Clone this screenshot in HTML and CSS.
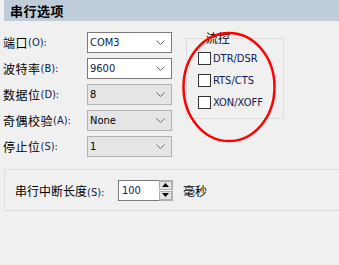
FILE: index.html
```html
<!DOCTYPE html>
<html lang="zh-CN">
<head>
<meta charset="utf-8">
<title>串行选项</title>
<link rel="stylesheet" href="styles.css">
</head>
<body>
<div class="page">
  <div class="header">串行选项</div>
  <div class="main">
    <div class="form">
      <label class="lbl">端口<span class="lat">(O):</span></label>
      <div class="combo"><span class="val">COM3</span><svg class="chev" width="9" height="5" viewBox="0 0 9 5"><polyline points="0.5,0.5 4.5,4.5 8.5,0.5" fill="none" stroke="#606060" stroke-width="1"/></svg></div>
      <label class="lbl">波特率<span class="lat">(B):</span></label>
      <div class="combo"><span class="val">9600</span><svg class="chev" width="9" height="5" viewBox="0 0 9 5"><polyline points="0.5,0.5 4.5,4.5 8.5,0.5" fill="none" stroke="#606060" stroke-width="1"/></svg></div>
      <label class="lbl">数据位<span class="lat">(D):</span></label>
      <div class="combo disabled"><span class="val">8</span><svg class="chev" width="9" height="5" viewBox="0 0 9 5"><polyline points="0.5,0.5 4.5,4.5 8.5,0.5" fill="none" stroke="#707070" stroke-width="1"/></svg></div>
      <label class="lbl">奇偶校验<span class="lat">(A):</span></label>
      <div class="combo disabled"><span class="val">None</span><svg class="chev" width="9" height="5" viewBox="0 0 9 5"><polyline points="0.5,0.5 4.5,4.5 8.5,0.5" fill="none" stroke="#707070" stroke-width="1"/></svg></div>
      <label class="lbl">停止位<span class="lat">(S):</span></label>
      <div class="combo disabled"><span class="val">1</span><svg class="chev" width="9" height="5" viewBox="0 0 9 5"><polyline points="0.5,0.5 4.5,4.5 8.5,0.5" fill="none" stroke="#707070" stroke-width="1"/></svg></div>
    </div>
    <fieldset class="flow">
      <legend class="legend">流控</legend>
      <label class="chk"><span class="box"></span><span class="lat">DTR/DSR</span></label>
      <label class="chk"><span class="box"></span><span class="lat">RTS/CTS</span></label>
      <label class="chk"><span class="box"></span><span class="lat">XON/XOFF</span></label>
    </fieldset>
  </div>
  <div class="brk">
    <span class="brk-lbl">串行中断长度<span class="lat">(S):</span></span>
    <div class="spin">
      <div class="spin-field"><span class="lat">100</span></div>
      <div class="spin-btns">
        <div class="sbtn"><svg width="7" height="4" viewBox="0 0 7 4"><polygon points="3.5,0 7,4 0,4" fill="#000"/></svg></div>
        <div class="sbtn"><svg width="7" height="4" viewBox="0 0 7 4"><polygon points="0,0 7,0 3.5,4" fill="#000"/></svg></div>
      </div>
    </div>
    <span class="unit">毫秒</span>
  </div>
  <svg class="annot" width="339" height="265" viewBox="0 0 339 265">
    <ellipse cx="229" cy="87" rx="45.5" ry="54" fill="none" stroke="#ff0000" stroke-width="2.5"/>
  </svg>
</div>
</body>
</html>
```

FILE: styles.css
```css
html, body {
  margin: 0;
  padding: 0;
  background: #f0f0f0;
}
body {
  font-family: "Noto Sans CJK SC", sans-serif;
  font-size: 12px;
  color: #000;
}
.page {
  position: relative;
  width: 339px;
  height: 265px;
  overflow: hidden;
}
.header {
  margin-left: 4px;
  height: 21px;
  line-height: 21px;
  background: #bfcddb;
  padding-left: 6px;
  font-weight: 700;
  font-size: 13px;
  letter-spacing: 0.5px;
}
.lat,
.combo .val {
  font-family: "DejaVu Sans Condensed", "DejaVu Sans", sans-serif;
  font-stretch: condensed;
  font-size: 11px;
  color: #0d1c52;
  letter-spacing: 0;
}
.main {
  display: flex;
  align-items: flex-start;
  margin-top: 11px;
}
.form {
  display: grid;
  grid-template-columns: 84px 85px;
  grid-auto-rows: 21px;
  row-gap: 5px;
  padding-left: 3px;
}
.lbl {
  display: flex;
  align-items: center;
  letter-spacing: 0.5px;
}
.combo {
  box-sizing: border-box;
  display: flex;
  align-items: center;
  justify-content: space-between;
  border: 1px solid #7a7a7a;
  background: #fff;
  padding: 0 6px 0 2px;
}
.combo.disabled {
  background: #e5e5e5;
  border-color: #b2b2b2;
}
.combo.disabled .val {
  color: #000;
}
.flow {
  box-sizing: border-box;
  margin: 0 0 0 14px;
  width: 98px;
  height: 87px;
  border: 1px solid #dcdcdc;
  padding: 3px 0 0 11px;
  min-width: 0;
}
.legend {
  padding: 0 1px;
  margin-left: 7px;
  line-height: 12px;
}
.chk {
  display: flex;
  align-items: center;
  height: 22px;
}
.box {
  box-sizing: border-box;
  width: 13px;
  height: 13px;
  border: 1px solid #333;
  background: #fff;
  margin-right: 2px;
}
.brk {
  box-sizing: border-box;
  display: flex;
  align-items: center;
  margin: 12px 0 0 4px;
  height: 42px;
  border: 1px solid #dcdcdc;
  border-right: none;
  padding-left: 10px;
}
.brk-lbl {
  width: 103px;
}
.spin {
  display: flex;
  height: 21px;
}
.spin-field {
  box-sizing: border-box;
  width: 41px;
  height: 21px;
  border: 1px solid #7a7a7a;
  border-right: none;
  background: #fff;
  padding-left: 3px;
  display: flex;
  align-items: center;
}
.spin-btns {
  box-sizing: border-box;
  width: 14px;
  height: 21px;
  display: flex;
  flex-direction: column;
  gap: 1px;
  border: 1px solid #b0b0b0;
  border-left: none;
  background: #fff;
}
.sbtn {
  flex: 1;
  box-sizing: border-box;
  border: 1px solid #adadad;
  background: #e4e4e4;
  display: flex;
  align-items: center;
  justify-content: center;
}
.unit {
  margin-left: 10px;
}
.annot {
  position: absolute;
  left: 0;
  top: 0;
  pointer-events: none;
}
```
